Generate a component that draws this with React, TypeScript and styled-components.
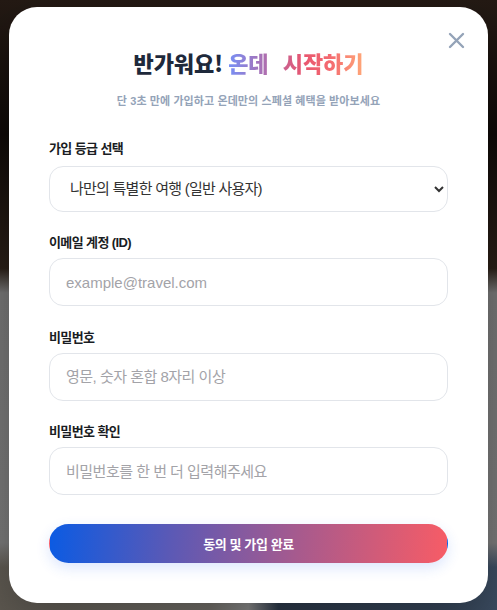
import React from 'react';
import styled, { createGlobalStyle } from 'styled-components';

const GlobalStyle = createGlobalStyle`
  html, body {
    margin: 0;
    padding: 0;
  }
  body {
    font-family: "Liberation Sans", "Noto Sans CJK KR", sans-serif;
  }
  * {
    box-sizing: border-box;
  }
`;

const Backdrop = styled.div`
  min-height: 100vh;
  display: flex;
  align-items: center;
  justify-content: center;
  background:
    linear-gradient(180deg, #241a14 0%, #0f0a08 22%, #2a1f17 44%, #767676 48%, #7a7a7a 89%, rgba(120, 120, 120, 0) 93%),
    linear-gradient(90deg, #5f5a52 0%, #73706a 42%, #8a8a8a 50%, #2d394a 56%, #3c4d62 100%);
`;

const Modal = styled.div`
  position: relative;
  width: 479px;
  background: #ffffff;
  border-radius: 28px;
  padding: 40px;
  box-shadow: 0 20px 50px rgba(0, 0, 0, 0.3);
`;

const CloseButton = styled.button`
  position: absolute;
  top: 25px;
  right: 23px;
  width: 17px;
  height: 17px;
  padding: 0;
  border: none;
  background: none;
  cursor: pointer;
  display: flex;
  align-items: center;
  justify-content: center;
`;

const Title = styled.h1`
  margin: 0;
  text-align: center;
  font-family: "Noto Sans CJK KR", sans-serif;
  font-size: 22px;
  line-height: 30px;
  font-weight: 800;
  color: #1e293b;
`;

const Accent = styled.span`
  word-spacing: 9px;
  background: linear-gradient(90deg, #7690f6 0%, #a871b6 25%, #e8556f 55%, #f46a70 75%, #ffa878 100%);
  -webkit-background-clip: text;
  background-clip: text;
  color: transparent;
`;

const Subtitle = styled.p`
  margin: 15.5px 0 0;
  text-align: center;
  font-size: 11px;
  line-height: 16px;
  font-weight: 600;
  letter-spacing: 0.1px;
  color: #94a3b8;
`;

const Form = styled.form`
  margin-top: 31px;
  display: flex;
  flex-direction: column;
  gap: 22.5px;
`;

const Field = styled.div`
  display: flex;
  flex-direction: column;
  gap: 6px;
`;

const Label = styled.label`
  font-size: 13px;
  line-height: 18px;
  font-weight: 700;
  letter-spacing: -0.6px;
  color: #1a1d23;
`;

const Select = styled.select`
  margin-top: 2px;
  height: 46px;
  width: 100%;
  padding: 0 4px 0 16px;
  border: 1px solid #e2e5ea;
  border-radius: 14px;
  background: #ffffff;
  font-family: "Liberation Sans", "Noto Sans CJK KR", sans-serif;
  font-size: 15px;
  letter-spacing: -0.75px;
  color: #333333;
  outline: none;
`;

const Input = styled.input<{ $latin?: boolean }>`
  height: 48px;
  width: 100%;
  padding: 0 16px;
  border: 1px solid #e2e5ea;
  border-radius: 14px;
  background: #ffffff;
  font-family: "Liberation Sans", "Noto Sans CJK KR", sans-serif;
  font-size: 15px;
  color: #333333;
  outline: none;
  &::placeholder {
    color: #a3a3a8;
    letter-spacing: ${(p) => (p.$latin ? '0' : '-0.5px')};
  }
`;

const SubmitButton = styled.button`
  margin-top: 6px;
  height: 39px;
  width: 100%;
  border: 1px solid transparent;
  border-radius: 999px;
  background: linear-gradient(95deg, #0b5be3 0%, #5a59b6 30%, #a65a8e 62%, #f75c66 100%);
  box-shadow: 0 5px 14px rgba(40, 100, 240, 0.16);
  font-family: "Liberation Sans", "Noto Sans CJK KR", sans-serif;
  font-size: 13px;
  font-weight: 700;
  letter-spacing: -0.4px;
  color: #ffffff;
  cursor: pointer;
`;

const CloseIcon = () => (
  <svg width="17" height="17" viewBox="0 0 17 17" fill="none">
    <path d="M2 2L15 15M15 2L2 15" stroke="#94a3b8" strokeWidth="2.4" strokeLinecap="round" />
  </svg>
);

export default function App() {
  return (
    <>
      <GlobalStyle />
      <Backdrop>
        <Modal>
          <CloseButton aria-label="닫기">
            <CloseIcon />
          </CloseButton>
          <Title>
            반가워요! <Accent>온데 시작하기</Accent>
          </Title>
          <Subtitle>단 3초 만에 가입하고 온데만의 스페셜 혜택을 받아보세요</Subtitle>
          <Form onSubmit={(e) => e.preventDefault()}>
            <Field>
              <Label>가입 등급 선택</Label>
              <Select defaultValue="normal">
                <option value="normal">나만의 특별한 여행 (일반 사용자)</option>
                <option value="partner">여행 파트너 (사업자)</option>
              </Select>
            </Field>
            <Field>
              <Label>이메일 계정 (ID)</Label>
              <Input type="email" placeholder="example@travel.com" $latin />
            </Field>
            <Field>
              <Label>비밀번호</Label>
              <Input type="password" placeholder="영문, 숫자 혼합 8자리 이상" />
            </Field>
            <Field>
              <Label>비밀번호 확인</Label>
              <Input type="password" placeholder="비밀번호를 한 번 더 입력해주세요" />
            </Field>
            <SubmitButton type="submit">동의 및 가입 완료</SubmitButton>
          </Form>
        </Modal>
      </Backdrop>
    </>
  );
}
